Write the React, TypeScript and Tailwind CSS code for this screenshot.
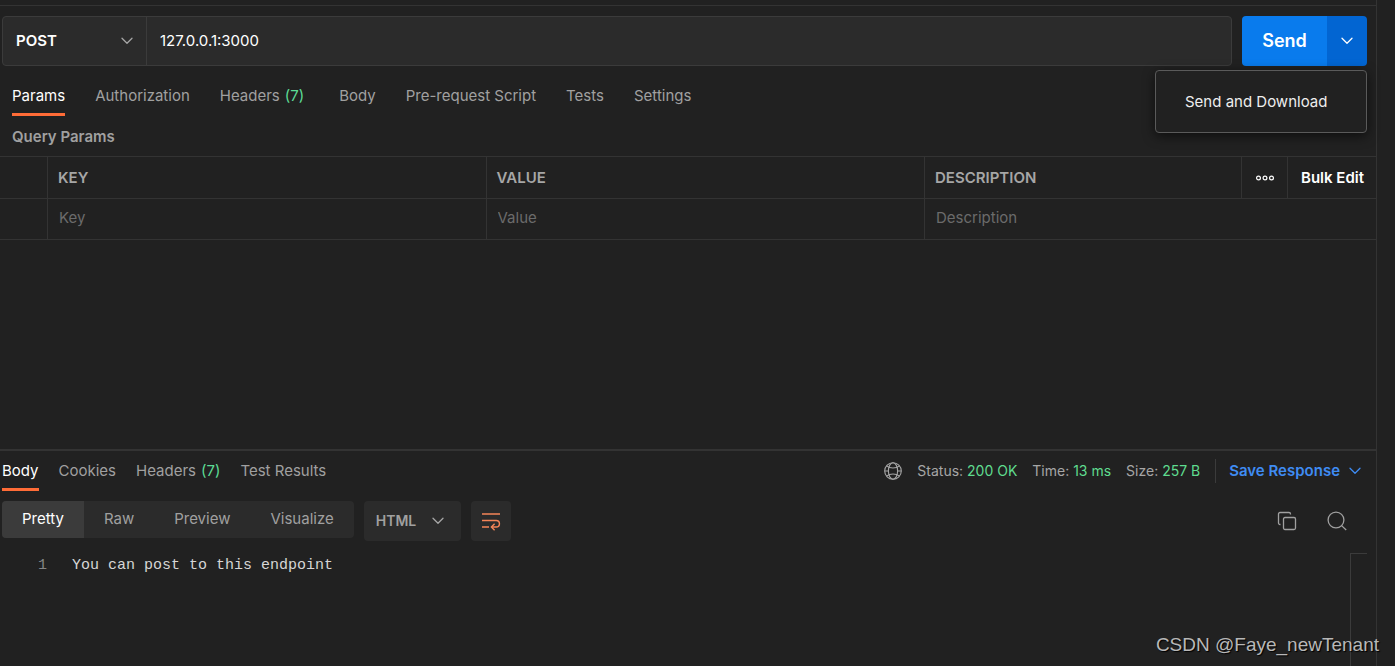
import React from 'react';

function Chevron({ className = '' }: { className?: string }) {
  return (
    <svg width="12" height="8" viewBox="0 0 12 8" fill="none" stroke="currentColor" strokeWidth="1.3" strokeLinecap="round" strokeLinejoin="round" className={className} aria-hidden="true">
      <path d="M1 1.3 6 6.3 11 1.3" />
    </svg>
  );
}

function GlobeIcon() {
  return (
    <svg width="18" height="18" viewBox="0 0 18 18" fill="none" stroke="currentColor" strokeWidth="1.1" aria-hidden="true">
      <circle cx="9" cy="9" r="8.3" />
      <ellipse cx="9" cy="9" rx="4.6" ry="8.3" />
      <path d="M2.6 3.8C4.2 5.2 6.4 6 9 6s4.8-.8 6.4-2.2M2.6 14.2C4.2 12.800 6.4 12 9 12s4.8.8 6.4 2.2M.7 9h3.7M13.6 9h3.7" />
    </svg>
  );
}

function WrapIcon() {
  return (
    <svg width="20" height="20" viewBox="0 0 20 20" fill="none" stroke="currentColor" strokeWidth="1.4" aria-hidden="true">
      <path d="M1 3h18M1 9.5h14.2a3 3 0 0 1 0 6.5H11M1 16h7" />
      <path d="M13.6 12.800 10.4 16l3.2 3.2" />
    </svg>
  );
}

function CopyIcon() {
  return (
    <svg width="20" height="20" viewBox="0 0 20 20" fill="none" stroke="currentColor" strokeWidth="1.3" aria-hidden="true">
      <rect x="6.5" y="6.5" width="12" height="12" rx="1.5" />
      <path d="M3.5 13.5H3A1.5 1.5 0 0 1 1.5 12V3A1.5 1.5 0 0 1 3 1.5h9A1.5 1.5 0 0 1 13.5 3v.5" />
    </svg>
  );
}

function SearchIcon() {
  return (
    <svg width="20" height="20" viewBox="0 0 20 20" fill="none" stroke="currentColor" strokeWidth="1.3" aria-hidden="true">
      <circle cx="9" cy="9" r="7.9" />
      <path d="m14.6 14.6 4.6 4.4" />
    </svg>
  );
}

function Tab({ label, count, active = false }: { label: string; count?: number; active?: boolean }) {
  return (
    <button
      type="button"
      role="tab"
      aria-selected={active}
      className={`border-b-[3px] pb-[7px] leading-5 whitespace-nowrap ${active ? 'border-[#ff6c37] text-white' : 'border-transparent text-[#a0a0a0]'}`}
    >
      {label}
      {count !== undefined && <span className="ml-[5px] text-[#5cdb95]">({count})</span>}
    </button>
  );
}

function Stat({ label, value }: { label: string; value: string }) {
  return (
    <span className="text-sm leading-5 whitespace-nowrap">
      {label}: <span className="text-[#5fdc8f]">{value}</span>
    </span>
  );
}

const views = ['Pretty', 'Raw', 'Preview', 'Visualize'];

function RequestPane() {
  return (
    <section className="pt-[10px] pb-[209px]">
      <form className="flex gap-[10px] pr-[9px] pl-[2px]" onSubmit={(e) => e.preventDefault()}>
        <div className="flex h-[50px] min-w-0 flex-1 rounded-[4px] border border-[#3b3b3b] bg-[#2b2b2b]">
          <div className="relative flex w-[144px] border-r border-[#3b3b3b]">
            <select aria-label="Method" defaultValue="POST" className="w-full appearance-none bg-transparent pl-[13px] font-semibold text-white outline-none">
              <option>GET</option>
              <option>POST</option>
            </select>
            <Chevron className="pointer-events-none absolute top-5 right-[13px] text-[#a6a6a6]" />
          </div>
          <input aria-label="Request URL" defaultValue="127.0.0.1:3000" className="min-w-0 flex-1 bg-transparent px-[13px] text-white outline-none" />
        </div>
        <div className="relative flex h-[50px]">
          <button type="submit" className="w-[85px] rounded-l-[4px] bg-[#097bed] text-lg font-semibold text-white">Send</button>
          <button type="button" aria-label="Send options" className="flex w-10 items-center justify-center rounded-r-[4px] bg-[#0265d2] text-white">
            <Chevron />
          </button>
          <div role="menu" className="absolute top-[54px] right-0 z-10 rounded-[4px] border border-[#5a5a5a] bg-[#212121] shadow-[0_3px_12px_rgba(0,0,0,0.6)]">
            <button type="button" role="menuitem" className="h-[61px] w-[210px] pt-px pl-[29px] text-left whitespace-nowrap text-[#eeeeee]">Send and Download</button>
          </div>
        </div>
      </form>
      <div role="tablist" aria-label="Request" className="flex gap-[30px] pt-5 pl-3">
        <Tab label="Params" active />
        <Tab label="Authorization" />
        <div className="flex pr-[5px]">
          <Tab label="Headers" count={7} />
        </div>
        <Tab label="Body" />
        <Tab label="Pre-request Script" />
        <Tab label="Tests" />
        <Tab label="Settings" />
      </div>
      <h2 className="pt-[11px] pb-[9px] pl-3 leading-5 font-semibold text-[#a0a0a0]">Query Params</h2>
      <table className="w-full table-fixed border-separate border-spacing-0 border-t border-[#333333] text-left">
        <thead>
          <tr className="h-[42px] text-[#a6a6a6] [&>th]:border-b [&>th]:border-[#333333] [&>th]:pt-px">
            <th className="w-12 border-r" aria-label="Enabled" />
            <th className="border-r pl-[10px] font-semibold">KEY</th>
            <th className="border-r pl-[10px] font-semibold">VALUE</th>
            <th className="w-[317px] border-r pl-[10px] font-semibold">DESCRIPTION</th>
            <th className="w-[46px] border-r">
              <button type="button" aria-label="More columns" className="flex w-full justify-center text-white">
                <svg width="19" height="6" viewBox="0 0 19 6" fill="none" stroke="currentColor" strokeWidth="1.2" aria-hidden="true">
                  <circle cx="3.5" cy="3" r="1.9" />
                  <circle cx="10" cy="3" r="1.9" />
                  <circle cx="16.5" cy="3" r="1.9" />
                </svg>
              </button>
            </th>
            <th className="w-[88px] pl-[13px]">
              <button type="button" className="font-semibold whitespace-nowrap text-white">Bulk Edit</button>
            </th>
          </tr>
        </thead>
        <tbody>
          <tr className="h-[41px] [&>td]:border-b [&>td]:border-[#333333] [&>td]:pb-[2px]">
            <td className="border-r" />
            <td className="border-r pl-[11px]">
              <input aria-label="Key" placeholder="Key" className="w-full bg-transparent leading-5 outline-none placeholder:text-[#6b6b6b]" />
            </td>
            <td className="border-r pl-[11px]">
              <input aria-label="Value" placeholder="Value" className="w-full bg-transparent leading-5 outline-none placeholder:text-[#6b6b6b]" />
            </td>
            <td colSpan={3} className="pl-[11px]">
              <input aria-label="Description" placeholder="Description" className="w-full bg-transparent leading-5 outline-none placeholder:text-[#6b6b6b]" />
            </td>
          </tr>
        </tbody>
      </table>
    </section>
  );
}

function ResponsePane() {
  return (
    <section className="flex flex-1 flex-col border-t-2 border-[#333333]">
      <div className="flex justify-between pr-[15px] pl-[2px]">
        <div role="tablist" aria-label="Response" className="flex gap-5 pt-[10px]">
          <Tab label="Body" active />
          <Tab label="Cookies" />
          <Tab label="Headers" count={7} />
          <Tab label="Test Results" />
        </div>
        <div className="flex items-center gap-[15px] text-[#a6a6a6]">
          <GlobeIcon />
          <Stat label="Status" value="200 OK" />
          <Stat label="Time" value="13 ms" />
          <Stat label="Size" value="257 B" />
          <button type="button" className="flex h-6 items-center gap-[9px] border-l border-[#3b3b3b] pl-[13px] font-semibold whitespace-nowrap text-[#3f8cf3]">
            Save Response
            <Chevron />
          </button>
        </div>
      </div>
      <div className="flex items-start gap-[10px] pt-[10px] pl-[2px]">
        <div className="flex h-[37px] overflow-hidden rounded-[4px] bg-[#2b2b2b]">
          {views.map((view, i) => (
            <button key={view} type="button" aria-pressed={i === 0} className={`px-5 ${i === 0 ? 'bg-[#3b3b3b] text-white' : 'text-[#a0a0a0]'}`}>
              {view}
            </button>
          ))}
        </div>
        <div className="relative flex h-10 w-[97px] rounded-[4px] bg-[#2b2b2b]">
          <select aria-label="Language" defaultValue="HTML" className="w-full appearance-none bg-transparent pl-3 text-sm font-semibold text-[#a0a0a0] outline-none">
            <option>HTML</option>
            <option>JSON</option>
          </select>
          <Chevron className="pointer-events-none absolute top-4 right-[17px] text-[#a6a6a6]" />
        </div>
        <button type="button" aria-label="Wrap lines" className="flex size-10 items-center justify-center rounded-[4px] bg-[#2b2b2b] text-[#f58558]">
          <WrapIcon />
        </button>
        <div className="ml-auto flex h-10 items-center gap-[30px] pr-[29px] text-[#a0a0a0]">
          <button type="button" aria-label="Copy"><CopyIcon /></button>
          <button type="button" aria-label="Search"><SearchIcon /></button>
        </div>
      </div>
      <div className="flex flex-1 pt-3 pr-[9px]">
        <pre className="flex-1 font-['Liberation_Mono',monospace] leading-[25px] text-[#d6d6d6]"><span className="inline-block w-[47px] text-right text-[#858585]">1</span><span className="ml-[25px]">You can post to this endpoint</span></pre>
        <div className="w-[17px] border-t border-l border-[#3b3b3b]" />
      </div>
    </section>
  );
}

export default function App() {
  return (
    <div className="relative flex min-h-screen bg-[#212121] pr-[18px] font-['Inter',sans-serif] text-[15px]">
      <main className="flex min-w-0 flex-1 flex-col border-r border-[#333333] pt-[5px]">
        <div className="flex flex-1 flex-col border-t border-[#333333]">
          <RequestPane />
          <ResponsePane />
        </div>
      </main>
      <p className="absolute right-4 bottom-[6px] font-['Liberation_Sans',sans-serif] text-[19px] leading-[30px] text-[#b8b8b8] [text-shadow:1px_1px_1px_#000000]">CSDN @Faye_newTenant</p>
    </div>
  );
}
